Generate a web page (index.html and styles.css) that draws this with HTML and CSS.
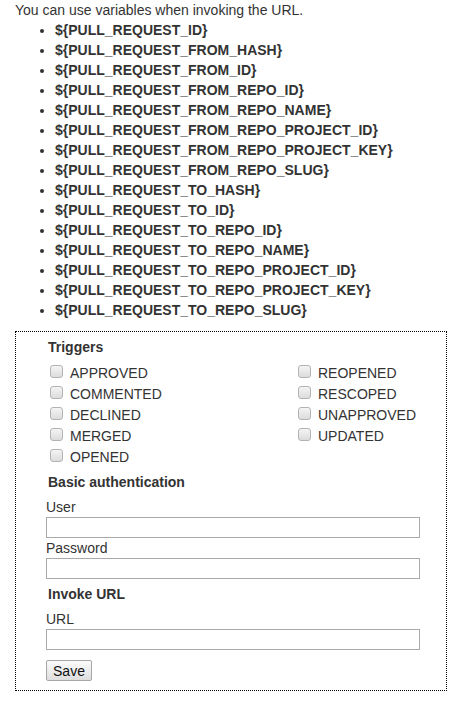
FILE: index.html
```html
<!DOCTYPE html>
<html>
<head>
<meta charset="utf-8">
<link rel="stylesheet" href="styles.css">
</head>
<body>
<div class="intro">You can use variables when invoking the URL.</div>
<ul class="vars">
  <li>${PULL_REQUEST_ID}</li>
  <li>${PULL_REQUEST_FROM_HASH}</li>
  <li>${PULL_REQUEST_FROM_ID}</li>
  <li>${PULL_REQUEST_FROM_REPO_ID}</li>
  <li>${PULL_REQUEST_FROM_REPO_NAME}</li>
  <li>${PULL_REQUEST_FROM_REPO_PROJECT_ID}</li>
  <li>${PULL_REQUEST_FROM_REPO_PROJECT_KEY}</li>
  <li>${PULL_REQUEST_FROM_REPO_SLUG}</li>
  <li>${PULL_REQUEST_TO_HASH}</li>
  <li>${PULL_REQUEST_TO_ID}</li>
  <li>${PULL_REQUEST_TO_REPO_ID}</li>
  <li>${PULL_REQUEST_TO_REPO_NAME}</li>
  <li>${PULL_REQUEST_TO_REPO_PROJECT_ID}</li>
  <li>${PULL_REQUEST_TO_REPO_PROJECT_KEY}</li>
  <li>${PULL_REQUEST_TO_REPO_SLUG}</li>
</ul>
<form class="box">
  <div class="heading">Triggers</div>
  <div class="triggers">
    <div class="col">
      <label class="check"><input type="checkbox"><span>APPROVED</span></label>
      <label class="check"><input type="checkbox"><span>COMMENTED</span></label>
      <label class="check"><input type="checkbox"><span>DECLINED</span></label>
      <label class="check"><input type="checkbox"><span>MERGED</span></label>
      <label class="check"><input type="checkbox"><span>OPENED</span></label>
    </div>
    <div class="col">
      <label class="check"><input type="checkbox"><span>REOPENED</span></label>
      <label class="check"><input type="checkbox"><span>RESCOPED</span></label>
      <label class="check"><input type="checkbox"><span>UNAPPROVED</span></label>
      <label class="check"><input type="checkbox"><span>UPDATED</span></label>
    </div>
  </div>
  <div class="heading gap">Basic authentication</div>
  <label class="field-label gap">User</label>
  <input class="text" type="text">
  <label class="field-label">Password</label>
  <input class="text" type="password">
  <div class="heading gap">Invoke URL</div>
  <label class="field-label gap">URL</label>
  <input class="text" type="text">
  <div class="actions"><button type="button" class="btn">Save</button></div>
</form>
</body>
</html>
```
FILE: styles.css
```css
html, body {
  margin: 0;
  padding: 0;
  background: #fff;
}
body {
  padding: 0 14px 0 15px;
  font-family: "Liberation Sans", Arial, sans-serif;
  font-size: 14px;
  line-height: 20px;
  color: #333;
}
.intro {
  height: 20px;
}
.vars {
  margin: 0;
  padding-left: 40px;
  font-weight: bold;
}
.vars li {
  height: 20px;
}
.box {
  margin-top: 11px;
  border: 1px dotted #000;
  padding: 5px 0 9px 30px;
}
.heading {
  font-weight: bold;
  padding-left: 2px;
  height: 20px;
}
.gap {
  margin-top: 5px;
}
.triggers {
  display: grid;
  grid-template-columns: 248px auto;
  margin-top: 5px;
}
.col {
  display: flex;
  flex-direction: column;
}
.check {
  display: flex;
  align-items: flex-start;
  height: 21px;
}
.check span {
  line-height: 20px;
  padding-top: 1px;
}
.check input {
  -webkit-appearance: none;
  appearance: none;
  width: 13px;
  height: 13px;
  margin: 3px 7px 0 4px;
  border: 1px solid #b3b3b3;
  border-radius: 3px;
  background: linear-gradient(#f4f4f4, #dcdcdc);
  box-sizing: border-box;
}
.field-label {
  display: block;
  height: 20px;
}
.text {
  display: block;
  box-sizing: border-box;
  width: 374px;
  height: 21px;
  margin: 0;
  border: 1px solid #a9a9a9;
  padding: 0 3px;
  font: inherit;
  background: #fff;
}
.actions {
  margin-top: 10px;
}
.btn {
  box-sizing: border-box;
  height: 21px;
  width: 46px;
  padding: 0;
  margin: 0;
  font-family: "Liberation Sans", Arial, sans-serif;
  font-size: 14px;
  color: #111;
  border: 1px solid #a6a6a6;
  border-radius: 2px;
  background: linear-gradient(#fbfbfb, #dedede);
}
```
